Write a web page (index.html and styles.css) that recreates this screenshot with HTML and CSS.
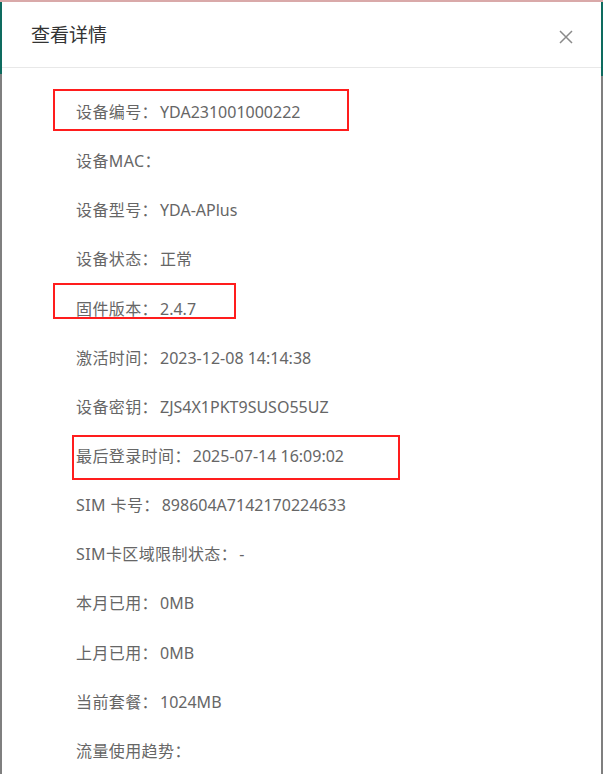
FILE: index.html
```html
<!DOCTYPE html>
<html lang="zh-CN">
<head>
<meta charset="utf-8">
<title>查看详情</title>
<link rel="stylesheet" href="styles.css">
</head>
<body>
<div class="modal">
  <div class="modal-header">
    <span class="modal-title">查看详情</span>
    <button class="modal-close" aria-label="关闭">
      <svg width="14" height="14" viewBox="0 0 14 14"><path d="M1 1L13 13M13 1L1 13" stroke="#8a8a8a" stroke-width="1.5" fill="none"/></svg>
    </button>
  </div>
  <div class="modal-body">
    <div class="row"><span class="label">设备编号：</span><span class="value">YDA231001000222</span></div>
    <div class="row"><span class="label">设备MAC：</span><span class="value"></span></div>
    <div class="row"><span class="label">设备型号：</span><span class="value">YDA-APlus</span></div>
    <div class="row"><span class="label">设备状态：</span><span class="value">正常</span></div>
    <div class="row"><span class="label">固件版本：</span><span class="value">2.4.7</span></div>
    <div class="row"><span class="label">激活时间：</span><span class="value">2023-12-08 14:14:38</span></div>
    <div class="row"><span class="label">设备密钥：</span><span class="value">ZJS4X1PKT9SUSO55UZ</span></div>
    <div class="row"><span class="label">最后登录时间：</span><span class="value">2025-07-14 16:09:02</span></div>
    <div class="row"><span class="label">SIM 卡号：</span><span class="value">898604A7142170224633</span></div>
    <div class="row"><span class="label">SIM卡区域限制状态：</span><span class="value">-</span></div>
    <div class="row"><span class="label">本月已用：</span><span class="value">0MB</span></div>
    <div class="row"><span class="label">上月已用：</span><span class="value">0MB</span></div>
    <div class="row"><span class="label">当前套餐：</span><span class="value">1024MB</span></div>
    <div class="row"><span class="label">流量使用趋势：</span><span class="value"></span></div>
  </div>
  <div class="mark mark-1"></div>
  <div class="mark mark-2"></div>
  <div class="mark mark-3"></div>
</div>
</body>
</html>
```

FILE: styles.css
```css
html, body {
  margin: 0;
  padding: 0;
  height: 100%;
  overflow: hidden;
}
body {
  background:
    linear-gradient(#d9a9a9, #d9a9a9) 0 0 / 100% 2px no-repeat,
    linear-gradient(#0e6b5f, #0e6b5f) 0 2px / 2px 72px no-repeat,
    linear-gradient(#0e6b5f, #0e6b5f) 601px 2px / 2px 74px no-repeat,
    #7f7f7f;
  font-family: "Noto Sans", "Noto Sans CJK SC", sans-serif;
  padding-top: 2px;
  box-sizing: border-box;
}
.modal {
  position: relative;
  margin-left: 2px;
  width: 599px;
  height: 900px;
  background: #fff;
}
.modal-header {
  display: flex;
  align-items: center;
  justify-content: space-between;
  height: 66px;
  padding: 0 28px 0 29px;
  border-bottom: 1px solid #e8e8e8;
  box-sizing: border-box;
}
.modal-title {
  font-size: 19px;
  color: #333;
  line-height: 1;
  padding-top: 2px;
}
.modal-close {
  border: 0;
  background: none;
  padding: 0;
  width: 14px;
  height: 14px;
  display: flex;
  cursor: pointer;
  margin-top: 4px;
}
.modal-body {
  padding: 20px 0 0 74px;
}
.row {
  height: 49.15px;
  line-height: 49px;
  font-size: 16px;
  color: #666;
  white-space: nowrap;
}
.label {
  letter-spacing: 0.4px;
}
.value {
  margin-left: 2px;
}
.mark {
  position: absolute;
  border: 2px solid #ff1d1d;
  box-sizing: border-box;
}
.mark-1 { left: 51px; top: 87px; width: 296px; height: 42px; }
.mark-2 { left: 51px; top: 281px; width: 183px; height: 36px; }
.mark-3 { left: 70px; top: 433px; width: 328px; height: 45px; }
```
